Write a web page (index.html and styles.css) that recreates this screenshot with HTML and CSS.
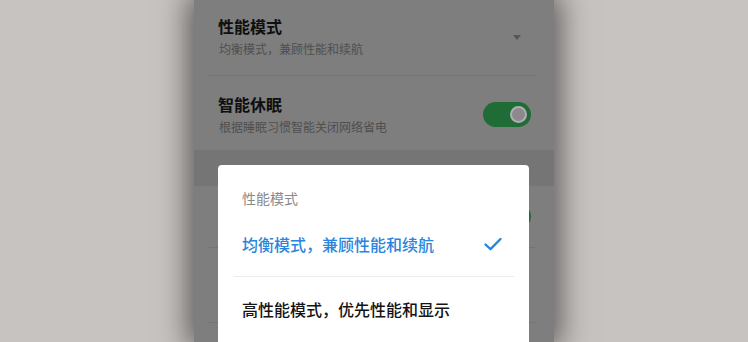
FILE: index.html
```html
<!DOCTYPE html>
<html lang="zh-CN">
<head>
<meta charset="utf-8">
<title>性能模式</title>
<link rel="stylesheet" href="styles.css">
</head>
<body>
<div class="stage">
  <div class="phone">
    <div class="settings">
      <div class="row">
        <div class="text">
          <div class="title">性能模式</div>
          <div class="sub">均衡模式，兼顾性能和续航</div>
        </div>
        <span class="caret"></span>
      </div>
      <div class="divider"></div>
      <div class="row row2">
        <div class="text">
          <div class="title">智能休眠</div>
          <div class="sub">根据睡眠习惯智能关闭网络省电</div>
        </div>
        <span class="toggle"><span class="knob"></span></span>
      </div>
      <div class="band"></div>
      <div class="row row3">
        <div class="text"></div>
        <span class="toggle"><span class="knob"></span></span>
      </div>
      <div class="divider"></div>
      <div class="row row4"></div>
      <div class="divider"></div>
    </div>

    <div class="dialog">
      <div class="dlg-title">性能模式</div>
      <div class="option selected">
        <span>均衡模式，兼顾性能和续航</span>
        <svg class="check" width="20" height="16" viewBox="0 0 20 16"><path d="M2.5 8.5 L7.5 13.2 L17.5 3" fill="none" stroke="#2a86dc" stroke-width="2.4" stroke-linecap="round" stroke-linejoin="round"/></svg>
      </div>
      <div class="dlg-divider"></div>
      <div class="option">
        <span>高性能模式，优先性能和显示</span>
      </div>
    </div>
  </div>
</div>
</body>
</html>
```

FILE: styles.css
```css
html, body {
  margin: 0;
  padding: 0;
}
body {
  width: 748px;
  height: 342px;
  overflow: hidden;
  background: #c7c3c1;
  font-family: "Noto Sans CJK SC", "Noto Sans", sans-serif;
}
.stage {
  display: flex;
  justify-content: center;
  height: 342px;
}
.phone {
  position: relative;
  width: 360px;
  height: 342px;
  background: #7e7e7e;
  box-shadow: 0 0 28px 6px rgba(0, 0, 0, 0.55);
  overflow: hidden;
}
.settings {
  display: flex;
  flex-direction: column;
}
.row {
  display: flex;
  align-items: center;
  justify-content: space-between;
  padding: 17px 23px 19px 25px;
  height: 39px;
}
.row2 {
  padding: 18px 23px 15px 25px;
  height: 41px;
}
.row3 {
  height: 61px;
  padding: 0 23px 0 25px;
}
.row4 {
  height: 74px;
  padding: 0;
}
.title {
  font-size: 16px;
  line-height: 20px;
  font-weight: 700;
  color: #0f0f0f;
  margin-left: -1px;
}
.sub {
  margin-top: 5px;
  font-size: 12px;
  line-height: 16px;
  color: #4f4f4f;
}
.caret {
  width: 0;
  height: 0;
  border-left: 4px solid transparent;
  border-right: 4px solid transparent;
  border-top: 5px solid #575757;
  margin-right: 10px;
  margin-top: 2px;
}
.divider {
  height: 1px;
  background: #747474;
  margin: 0 19px 0 14px;
}
.band {
  height: 36px;
  background: #757575;
}
.toggle {
  display: flex;
  align-items: center;
  justify-content: flex-end;
  width: 48px;
  height: 25px;
  border-radius: 13px;
  background: #1f6c36;
  padding-right: 4px;
  box-sizing: border-box;
}
.knob {
  width: 13px;
  height: 13px;
  border-radius: 50%;
  background: #8c888c;
  border: 2px solid #b3aeb2;
}
.dialog {
  position: absolute;
  left: 24px;
  top: 165px;
  width: 311px;
  height: 200px;
  background: #ffffff;
  border-radius: 4px;
  padding-top: 23px;
  box-sizing: border-box;
}
.dlg-title {
  font-size: 14px;
  line-height: 20px;
  color: #8a8a8a;
  padding-left: 24px;
  margin-bottom: 4px;
}
.option {
  display: flex;
  align-items: center;
  justify-content: space-between;
  height: 64px;
  padding: 0 26px 0 24px;
  font-size: 16px;
  font-weight: 500;
  color: #141414;
}
.option.selected {
  color: #2a86dc;
}
.check {
  display: block;
}
.dlg-divider {
  height: 1px;
  background: #ececec;
  margin: 0 15px 0 16px;
}
```
